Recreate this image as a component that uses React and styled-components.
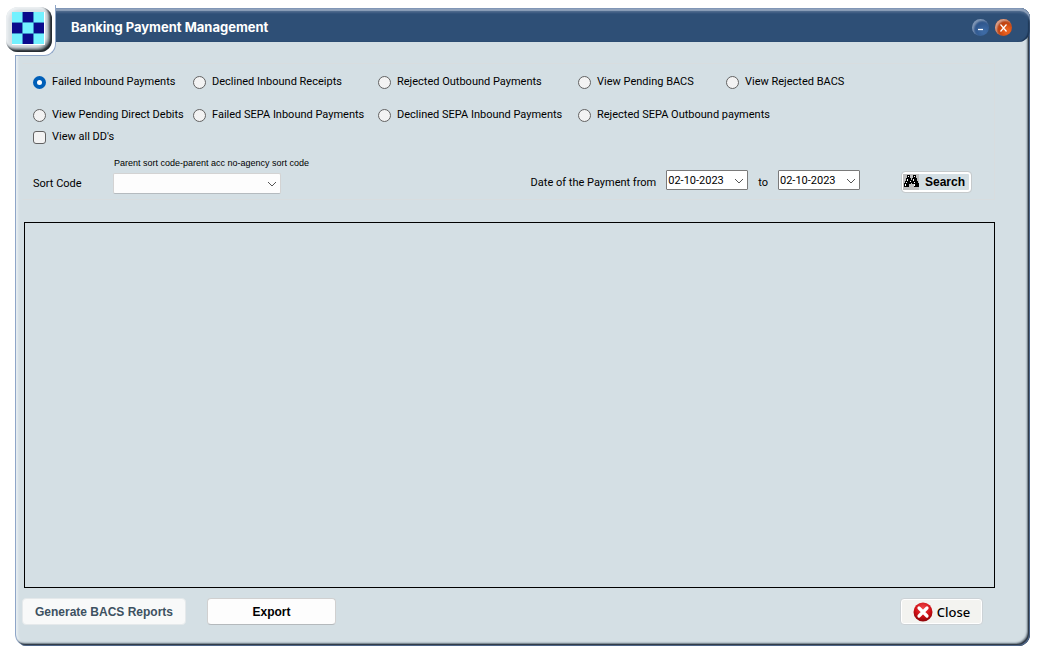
import React, { useState } from "react";
import styled, { createGlobalStyle } from "styled-components";

const Global = createGlobalStyle`
  *, *::before, *::after { box-sizing: border-box; }
  body {
    margin: 0;
    background: #fff;
    color: #000;
    font: 11px/16px Roboto, "Liberation Sans", sans-serif;
  }
  button, input, select { font: inherit; color: inherit; margin: 0; }
`;

const Page = styled.div`
  display: flex;
  min-height: 100vh;
  padding: 8px 8px 11px 15px;
`;

const Window = styled.main`
  position: relative;
  flex: 1;
  min-width: 0;
  display: flex;
  flex-direction: column;
  background: #d4dfe4;
  border-left: 1px solid #8fa6c8;
  border-radius: 12px 10px 12px 12px;
  box-shadow: inset -1px -1px 0 #4d6588, inset -2px -2px 1px #2c3641,
    inset -3px -3px 2px #6d7a85, inset 2px 0 2px #e6edf1;
`;

const TitleBar = styled.header`
  display: flex;
  align-items: center;
  gap: 6px;
  height: 34px;
  margin-left: -1px;
  padding: 4px 18px 0 56px;
  color: #fff;
  background: #2e4f76;
  border-radius: 0 10px 12px 0;
  box-shadow: inset 0 1px 0 #8096b6, inset 0 3px 1px #90a2bb, inset 0 5px 2px #48658a,
    inset -2px 0 1px #1d3655;
`;

const Title = styled.h1`
  flex: 1;
  margin: 0;
  font: 700 13px/18px Inter, "Liberation Sans", sans-serif;
`;

const RoundButton = styled.button`
  width: 17px;
  height: 17px;
  padding: 0;
  border: 0;
  border-radius: 50%;
  display: grid;
  place-items: center;
  background: ${(p) =>
    p.$close
      ? "radial-gradient(circle at 70% 70%, #e85f1e 15%, #b83c0c 55%, #6d2408 100%)"
      : "radial-gradient(circle at 70% 75%, #3d6aa4 10%, #2c5288 60%, #27466c 100%)"};
  box-shadow: inset 2px 2px 2px ${(p) => (p.$close ? "#d9a08a" : "#7f96b5")};
`;

const LogoFrame = styled.div`
  position: absolute;
  top: -3px;
  left: -10px;
  width: 50px;
  height: 51px;
  background: #fff;
  border: 1px solid #8fa6c8;
  border-top: 0;
  border-left: 0;
  border-radius: 0 0 12px 0;
  &::before {
    content: "";
    position: absolute;
    top: 0;
    left: 0;
    width: 9px;
    height: 51px;
    background: #fff;
  }
`;

const LogoTile = styled.div`
  position: absolute;
  top: 2px;
  left: 0;
  width: 46px;
  height: 45px;
  display: grid;
  place-items: center;
  border-radius: 12px;
  background: #d9dfe3;
  box-shadow: inset -2px -2px 2px #22282d, inset -4px -4px 3px #7e888f,
    inset 2px 2px 3px #eef2f4;
  svg { display: block; margin: 0 1px 2px 0; }
`;

const Content = styled.div`
  flex: 1;
  display: flex;
  flex-direction: column;
  padding: 21px 35px 21px 6px;
`;

const Filters = styled.form`
  height: 137px;
  margin-bottom: 22px;
  padding: 10px 0 0 10px;
  border: 1px solid #d8dddf;
  border-left-color: transparent;
`;

const Options = styled.div`
  display: grid;
  grid-template-columns: 160px 185px 200px 148px 1fr;
  row-gap: 17px;
`;

const Choice = styled.label`
  display: flex;
  align-items: center;
  gap: 6px;
  height: 16px;
  white-space: nowrap;
  grid-column: ${(p) => (p.$wide ? "span 2" : "auto")};
`;

const Mark = styled.input`
  appearance: none;
  flex: none;
  width: 13px;
  height: 13px;
  background: #f3f3f3;
  border: 1px solid #626262;
  border-radius: ${(p) => (p.type === "radio" ? "50%" : "3px")};
  &:checked {
    background: #fff;
    border: 4px solid #005fb8;
  }
`;

const AllDebits = styled.div`
  margin-top: 6px;
`;

const Criteria = styled.div`
  display: flex;
  align-items: flex-start;
  margin-top: 12px;
`;

const FieldLabel = styled.label`
  white-space: nowrap;
  margin-top: ${(p) => (p.$low ? "19px" : "18px")};
  width: ${(p) => (p.$low ? "80px" : "auto")};
`;

const SortCode = styled.div`
  display: flex;
  flex-direction: column;
`;

const Hint = styled.span`
  font: 9px/12px "Liberation Sans", sans-serif;
  margin-bottom: 4px;
  padding-left: 1px;
  white-space: nowrap;
`;

const SelectBox = styled.div`
  position: relative;
  width: 168px;
  svg { position: absolute; right: 4px; top: 8px; pointer-events: none; }
`;

const Select = styled.select`
  appearance: none;
  display: block;
  width: 100%;
  height: 21px;
  padding: 0 20px 0 4px;
  background: #fdfdfd;
  border: 1px solid #d3d3d3;
  border-bottom-color: #b5bbbf;
  border-radius: 2px;
`;

const Dates = styled.div`
  display: flex;
  align-items: flex-start;
  gap: 10px;
  margin-left: auto;
  margin-right: 41px;
`;

const DateBox = styled.div`
  display: flex;
  width: 82px;
  height: 20px;
  margin-top: 13px;
  background: #fff;
  border: 1px solid #7a7a7a;
  border-radius: 1px;
`;

const DateInput = styled.input`
  flex: 1;
  min-width: 0;
  height: 18px;
  padding: 0 0 0 1px;
  border: 0;
  background: none;
`;

const DropButton = styled.button`
  width: 16px;
  padding: 2px 0 0;
  border: 0;
  background: none;
  display: grid;
  place-items: center;
`;

const PushButton = styled.button`
  display: flex;
  align-items: center;
  justify-content: center;
  height: 27px;
  padding: 0;
  white-space: nowrap;
  font: bold 12px/16px "Liberation Sans", sans-serif;
  background: #fdfdfd;
  border: 1px solid #d0d0d0;
  border-bottom-color: #b4b9bc;
  border-radius: 4px;
  width: ${(p) => p.$width};
  &:disabled {
    color: #3d5161;
    background: #f8f9f9;
    border-color: #e5e9eb;
  }
`;

const SearchButton = styled(PushButton)`
  justify-content: flex-start;
  height: 22px;
  margin: 14px 22px 0 0;
  padding-left: 1px;
  gap: 6px;
  background: #d4dfe4;
  border-color: #c6cacc;
  box-shadow: inset 0 0 0 2px #fff;
  svg { background: #bfbfbf; }
`;

const CloseButton = styled(PushButton)`
  gap: 4px;
  font: 500 13px/16px "Noto Sans", sans-serif;
  background: #f3f3f0;
  border-color: #ccd2d6;
  box-shadow: inset 0 0 0 1px #fff;
`;

const Results = styled.section`
  flex: 1;
  min-height: 120px;
  margin-left: 2px;
  border: 1px solid #000;
`;

const Footer = styled.footer`
  display: flex;
  align-items: flex-start;
  gap: 21px;
  margin-top: 10px;
`;

const Spacer = styled.div`
  flex: 1;
`;

const FooterEnd = styled.div`
  margin-right: 12px;
`;

const Chevron = () => (
  <svg width="10" height="6" viewBox="0 0 10 6" fill="none" stroke="#555" aria-hidden="true">
    <path d="M1 1l4 4 4-4" />
  </svg>
);

const Checker = () => (
  <svg width="33" height="33" viewBox="0 0 33 33" aria-hidden="true">
    <path fill="#fff" d="M0 0h33v33H0z" />
    <path fill="#73f1ff" d="M0 0h32v32H0z" />
    <path fill="#0b0b8c" d="M11 0h10v11H11zM0 11h11v10H0zM21 11h11v10H21zM11 21h10v11H11z" />
    <path fill="none" stroke="#3d8ec8" d="M10.500 0v32M21.500 0v32M0 10.500h32M0 21.500h32" />
  </svg>
);

const Binoculars = () => (
  <svg width="16" height="16" viewBox="0 0 16 16" shapeRendering="crispEdges" aria-hidden="true">
    <path
      d="M4 1h3v3h1v2h1V4h1V1h3v3h1v3h1v2h1v4h-5v-3H9V9H8v1H6v3H1V9h1V7h1V4h1z"
      fill="#000"
    />
    <path
      d="M5 2h1v1H5zM11 2h1v1h-1zM4 5h1v2H4zM10 5h1v2h-1zM3 8h1v1H3zM7 7h1v1H7zM11 8h1v1h-1zM2 10h1v2H2zM11 10h1v2h-1z"
      fill="#fff"
    />
  </svg>
);

const CloseIcon = () => (
  <svg width="20" height="20" viewBox="0 0 20 20" aria-hidden="true">
    <defs>
      <radialGradient id="red" cx="50%" cy="30%" r="70%">
        <stop offset="0" stopColor="#f0484a" />
        <stop offset=".6" stopColor="#cf1016" />
        <stop offset="1" stopColor="#8c0408" />
      </radialGradient>
    </defs>
    <circle cx="10" cy="10" r="9.500" fill="url(#red)" />
    <path d="M6 6l8 8M14 6l-8 8" stroke="#fff" strokeWidth="3.200" strokeLinecap="round" />
  </svg>
);

const choices = [
  { text: "Failed Inbound Payments" },
  { text: "Declined Inbound Receipts" },
  { text: "Rejected Outbound Payments" },
  { text: "View Pending BACS" },
  { text: "View Rejected BACS" },
  { text: "View Pending Direct Debits" },
  { text: "Failed SEPA Inbound Payments" },
  { text: "Declined SEPA Inbound Payments" },
  { text: "Rejected SEPA Outbound payments", wide: true },
];

function DateField({ id }) {
  return (
    <DateBox>
      <DateInput id={id} defaultValue="02-10-2023" />
      <DropButton type="button" aria-label="Open calendar">
        <Chevron />
      </DropButton>
    </DateBox>
  );
}

export default function App() {
  const [selected, setSelected] = useState(choices[0].text);
  return (
    <>
      <Global />
      <Page>
        <Window>
          <TitleBar>
            <Title>Banking Payment Management</Title>
            <RoundButton aria-label="Minimize">
              <svg width="17" height="17" stroke="#fff" strokeWidth="1.300" aria-hidden="true">
                <path d="M6 10.500h5" />
              </svg>
            </RoundButton>
            <RoundButton $close aria-label="Close window">
              <svg width="17" height="17" stroke="#fff" strokeWidth="1.200" aria-hidden="true">
                <path d="M5.500 5.500l6 7M11.500 5.500l-6 7" />
              </svg>
            </RoundButton>
          </TitleBar>
          <LogoFrame>
            <LogoTile>
              <Checker />
            </LogoTile>
          </LogoFrame>
          <Content>
            <Filters onSubmit={(e) => e.preventDefault()}>
              <Options>
                {choices.map((c) => (
                  <Choice key={c.text} $wide={c.wide}>
                    <Mark
                      type="radio"
                      name="view"
                      checked={selected === c.text}
                      onChange={() => setSelected(c.text)}
                    />
                    {c.text}
                  </Choice>
                ))}
              </Options>
              <AllDebits>
                <Choice>
                  <Mark type="checkbox" />
                  View all DD's
                </Choice>
              </AllDebits>
              <Criteria>
                <FieldLabel htmlFor="sort" $low>
                  Sort Code
                </FieldLabel>
                <SortCode>
                  <Hint>Parent sort code-parent acc no-agency sort code</Hint>
                  <SelectBox>
                    <Select id="sort">
                      <option></option>
                    </Select>
                    <Chevron />
                  </SelectBox>
                </SortCode>
                <Dates>
                  <FieldLabel htmlFor="from">Date of the Payment from</FieldLabel>
                  <DateField id="from" />
                  <FieldLabel htmlFor="to">to</FieldLabel>
                  <DateField id="to" />
                </Dates>
                <SearchButton type="submit" $width="71px">
                  <Binoculars />
                  Search
                </SearchButton>
              </Criteria>
            </Filters>
            <Results aria-label="Payments" />
            <Footer>
              <PushButton disabled $width="164px">
                Generate BACS Reports
              </PushButton>
              <PushButton $width="129px">Export</PushButton>
              <Spacer />
              <FooterEnd>
                <CloseButton $width="83px">
                  <CloseIcon />
                  Close
                </CloseButton>
              </FooterEnd>
            </Footer>
          </Content>
        </Window>
      </Page>
    </>
  );
}
